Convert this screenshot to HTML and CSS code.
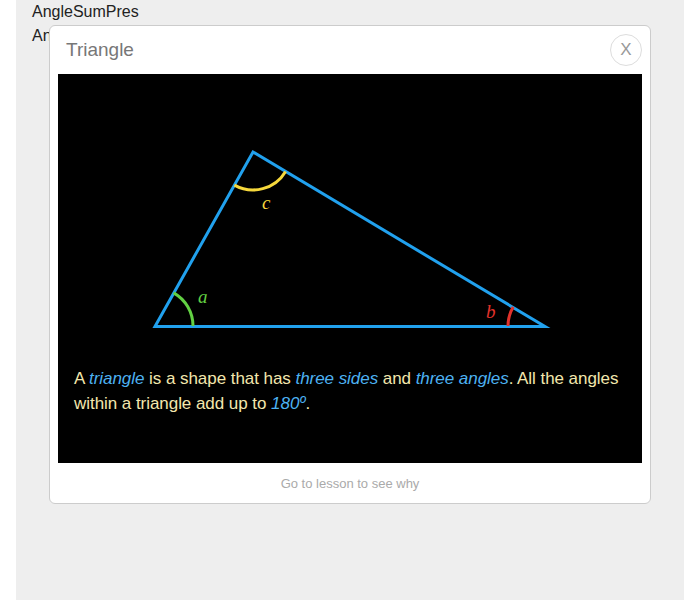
FILE: index.html
```
<!DOCTYPE html>
<html>
<head>
<meta charset="utf-8">
<link rel="stylesheet" href="styles.css">
</head>
<body>
<div class="page">
  <div class="line">AngleSumPres</div>
  <div class="line">AngleSumPres</div>
</div>
<div class="modal">
  <div class="modal-header">
    <div class="modal-title">Triangle</div>
    <div class="close">X</div>
  </div>
  <div class="stage">
    <svg class="figure" width="584" height="292" viewBox="58 74 584 292">
      <path d="M155 326.5 L253 152 L545 326.5 Z" fill="none" stroke="#21a1ee" stroke-width="3" stroke-linejoin="miter"/>
      <path d="M173.6 292.9 A38 38 0 0 1 193 326" fill="none" stroke="#62d043" stroke-width="3"/>
      <path d="M234.4 185.1 A38 38 0 0 0 285.6 171.4" fill="none" stroke="#f6d83c" stroke-width="3"/>
      <path d="M508 326 A37 37 0 0 1 513.2 307.1" fill="none" stroke="#e2322b" stroke-width="3"/>
      <text x="198" y="303" class="lbl lbl-a">a</text>
      <text x="262" y="209" class="lbl lbl-c">c</text>
      <text x="486" y="318" class="lbl lbl-b">b</text>
    </svg>
    <p class="caption">A <em>triangle</em> is a shape that has <em>three sides</em> and <em>three angles</em>. All the angles within a triangle add up to <em>180º</em>.</p>
  </div>
  <div class="modal-footer">Go to lesson to see why</div>
</div>
</body>
</html>
```
FILE: styles.css
```
html, body {
  margin: 0;
  padding: 0;
  background: #fff;
  font-family: "Liberation Sans", Arial, sans-serif;
}
.page {
  margin-left: 16px;
  width: 636px;
  height: 600px;
  padding: 0 16px;
  background: #eeeeee;
  color: #222;
  font-size: 16px;
}
.line {
  line-height: 24px;
}
.modal {
  position: absolute;
  left: 49px;
  top: 25px;
  width: 584px;
  padding: 0 8px;
  background: #fff;
  border: 1px solid #cccccc;
  border-radius: 6px;
}
.modal-header {
  height: 48px;
  display: flex;
  align-items: center;
  justify-content: space-between;
  padding-left: 8px;
}
.modal-title {
  font-size: 19px;
  color: #777;
}
.close {
  width: 30px;
  height: 30px;
  border: 1px solid #dddddd;
  border-radius: 50%;
  display: flex;
  align-items: center;
  justify-content: center;
  font-size: 17px;
  color: #999;
}
.stage {
  background: #000;
  height: 389px;
}
.figure {
  display: block;
}
.lbl {
  font-family: "Liberation Serif", "Times New Roman", serif;
  font-style: italic;
  font-size: 19px;
}
.lbl-a { fill: #62d043; }
.lbl-b { fill: #e2322b; }
.lbl-c { fill: #f6d83c; }
.caption {
  margin: 0;
  padding: 0 16px;
  font-size: 17px;
  line-height: 25px;
  letter-spacing: -0.05px;
  color: #f3e7ad;
}
.caption em {
  color: #4db2f2;
}
.modal-footer {
  height: 40px;
  display: flex;
  align-items: center;
  justify-content: center;
  font-size: 13px;
  color: #aaaaaa;
}
```
